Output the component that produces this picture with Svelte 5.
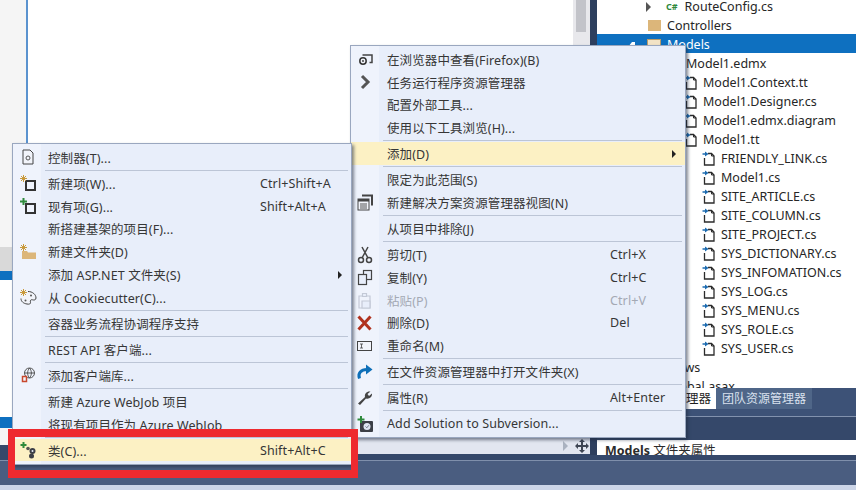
<script>
  const treeRows = [
    { label: 'RouteConfig.cs', depth: 'route', kind: 'cs' },
    { label: 'Controllers', depth: 'top', kind: 'folder' },
    { label: 'Models', depth: 'top', kind: 'open', selected: true },
    { label: 'Model1.edmx', depth: 'edmx', kind: 'none' },
    { label: 'Model1.Context.tt', depth: 'child', kind: 'file' },
    { label: 'Model1.Designer.cs', depth: 'child', kind: 'file' },
    { label: 'Model1.edmx.diagram', depth: 'child', kind: 'file' },
    { label: 'Model1.tt', depth: 'child', kind: 'file' },
    { label: 'FRIENDLY_LINK.cs', depth: 'leaf', kind: 'file' },
    { label: 'Model1.cs', depth: 'leaf', kind: 'file' },
    { label: 'SITE_ARTICLE.cs', depth: 'leaf', kind: 'file' },
    { label: 'SITE_COLUMN.cs', depth: 'leaf', kind: 'file' },
    { label: 'SITE_PROJECT.cs', depth: 'leaf', kind: 'file' },
    { label: 'SYS_DICTIONARY.cs', depth: 'leaf', kind: 'file' },
    { label: 'SYS_INFOMATION.cs', depth: 'leaf', kind: 'file' },
    { label: 'SYS_LOG.cs', depth: 'leaf', kind: 'file' },
    { label: 'SYS_MENU.cs', depth: 'leaf', kind: 'file' },
    { label: 'SYS_ROLE.cs', depth: 'leaf', kind: 'file' },
    { label: 'SYS_USER.cs', depth: 'leaf', kind: 'file' },
    { label: 'Views', depth: 'top', kind: 'none' },
    { label: 'Global.asax', depth: 'top', kind: 'none' }
  ];

  const addMenu = [
    { label: '控制器(T)...', icon: 'controller' },
    { sep: true },
    { label: '新建项(W)...', icon: 'newitem', key: 'Ctrl+Shift+A' },
    { label: '现有项(G)...', icon: 'existing', key: 'Shift+Alt+A' },
    { label: '新搭建基架的项目(F)...' },
    { label: '新建文件夹(D)', icon: 'newfolder' },
    { label: '添加 ASP.NET 文件夹(S)', arrow: true },
    { label: '从 Cookiecutter(C)...', icon: 'palette' },
    { sep: true },
    { label: '容器业务流程协调程序支持' },
    { sep: true },
    { label: 'REST API 客户端...' },
    { sep: true },
    { label: '添加客户端库...', icon: 'clientlib' },
    { sep: true },
    { label: '新建 Azure WebJob 项目' },
    { label: '将现有项目作为 Azure WebJob' },
    { sep: true },
    { label: '类(C)...', icon: 'cls', key: 'Shift+Alt+C', hot: true }
  ];

  const contextMenu = [
    { label: '在浏览器中查看(Firefox)(B)', icon: 'browser' },
    { label: '任务运行程序资源管理器', icon: 'chevron' },
    { label: '配置外部工具...' },
    { label: '使用以下工具浏览(H)...' },
    { sep: true },
    { label: '添加(D)', arrow: true, hot: true },
    { sep: true },
    { label: '限定为此范围(S)' },
    { label: '新建解决方案资源管理器视图(N)', icon: 'newview' },
    { sep: true },
    { label: '从项目中排除(J)' },
    { sep: true },
    { label: '剪切(T)', icon: 'cut', key: 'Ctrl+X' },
    { label: '复制(Y)', icon: 'copy', key: 'Ctrl+C' },
    { label: '粘贴(P)', icon: 'paste', key: 'Ctrl+V', disabled: true },
    { label: '删除(D)', icon: 'delete', key: 'Del' },
    { label: '重命名(M)', icon: 'rename' },
    { sep: true },
    { label: '在文件资源管理器中打开文件夹(X)', icon: 'open' },
    { sep: true },
    { label: '属性(R)', icon: 'wrench', key: 'Alt+Enter' },
    { sep: true },
    { label: 'Add Solution to Subversion...', icon: 'svn' }
  ];
</script>

{#snippet icon(name)}
  <svg class="icon" viewBox="0 0 18 18" width="18" height="18">
    {#if name === 'controller'}
      <path d="M4 2h7l3 3v11H4z" fill="#f2f4fa" stroke="#444" />
      <circle cx="9" cy="10" r="2" fill="none" stroke="#555" />
    {:else if name === 'newitem'}
      <rect x="7" y="7" width="9" height="9" fill="none" stroke="#333" stroke-width="2" />
      <path d="M4.500 1v7M1 4.500h7M2 2l5 5M7 2l-5 5" stroke="#c99a3c" />
    {:else if name === 'existing'}
      <rect x="7" y="7" width="9" height="9" fill="none" stroke="#333" stroke-width="2" />
      <path d="M4.500 1v7M1 4.500h7" stroke="#2f8a3c" stroke-width="2" />
    {:else if name === 'newfolder'}
      <path d="M3 8h5l1 1.500h8v6.500H3z" fill="#dcb67a" />
      <path d="M4.500 1v7M1 4.500h7M2 2l5 5M7 2l-5 5" stroke="#c99a3c" />
    {:else if name === 'palette'}
      <path d="M9 3.500c4.500 0 8 3 8 6.500 0 2-2 2.300-3.500 1.800-2-.5-2.500 1-2 2.500.3 1.500-1 2.200-3.500 1.700C4.500 15.500 2 13.500 2 10.500" fill="#f2f4fa" stroke="#444" />
      <circle cx="12" cy="7.500" r="1" fill="#555" />
      <circle cx="6.500" cy="12.500" r="1" fill="#555" />
      <path d="M4.500 1v7M1 4.500h7M2 2l5 5M7 2l-5 5" stroke="#c99a3c" />
    {:else if name === 'clientlib'}
      <circle cx="10.500" cy="7" r="5" fill="none" stroke="#555" />
      <path d="M5.500 7h10M10.500 2c-2.500 3-2.500 7 0 10M10.500 2c2.500 3 2.500 7 0 10" fill="none" stroke="#555" />
      <rect x="3.500" y="10.500" width="4" height="5" fill="#f2f4fa" stroke="#c8472c" stroke-width="1.500" />
    {:else if name === 'cls'}
      <path d="M4.500 1v6M1.500 4h6" stroke="#2f8a3c" stroke-width="2" />
      <circle cx="9" cy="7.500" r="1.800" fill="#555" />
      <circle cx="13.500" cy="10" r="3" fill="#3c3f46" />
      <circle cx="12.500" cy="15" r="2.500" fill="#3c3f46" />
      <circle cx="13.500" cy="10" r="1" fill="#e8eefa" />
    {:else if name === 'browser'}
      <path d="M6.500 5h9.500v7.500h-2.500" fill="none" stroke="#444" stroke-width="1.500" />
      <circle cx="7" cy="11" r="3.200" fill="#f2f4fa" stroke="#333" stroke-width="1.500" />
      <circle cx="7" cy="11" r=".9" fill="#333" />
    {:else if name === 'chevron'}
      <path d="M6 3l6 6-6 6" fill="none" stroke="#555" stroke-width="3" />
    {:else if name === 'newview'}
      <path d="M6 1.500h10v10" fill="none" stroke="#444" stroke-width="2" />
      <rect x="2" y="5" width="11" height="11" fill="#f2f4fa" stroke="#444" />
      <rect x="2" y="5" width="11" height="2.500" fill="#444" />
      <path d="M4 10h7M4 12h7M4 14h7" stroke="#555" />
    {:else if name === 'cut'}
      <path d="M6 1l6 11M12 1L6 12" stroke="#444" stroke-width="1.500" />
      <circle cx="5" cy="14" r="2.500" fill="none" stroke="#444" stroke-width="1.500" />
      <circle cx="13" cy="14" r="2.500" fill="none" stroke="#444" stroke-width="1.500" />
    {:else if name === 'copy'}
      <rect x="7.500" y="2.500" width="8" height="9" fill="#e8eefa" stroke="#444" stroke-width="1.200" />
      <rect x="2.500" y="6.500" width="8" height="10" fill="#e8eefa" stroke="#444" stroke-width="1.200" />
    {:else if name === 'paste'}
      <path d="M3 5h11v12H3z" fill="none" stroke="#c3c9d6" stroke-width="1.200" />
      <path d="M6.500 2.500h4v3h-4zM6 10h8v7H6z" fill="#e8eefa" stroke="#c3c9d6" stroke-width="1.200" />
    {:else if name === 'delete'}
      <path d="M2.500 2.500l12 13M14.500 2.500l-12 13" stroke="#b0321e" stroke-width="3" />
    {:else if name === 'rename'}
      <rect x="1.500" y="4.500" width="14" height="9" fill="#f2f4fa" stroke="#444" />
      <path d="M4 7h3M4 11h3M5.500 7v4" stroke="#444" stroke-width=".8" />
    {:else if name === 'open'}
      <path d="M3.500 15.500C1.500 10 5 6.500 11 6.500" fill="none" stroke="#0e6fb8" stroke-width="3" />
      <path d="M10 1.500l6.500 5-6.500 5z" fill="#0e6fb8" />
    {:else if name === 'wrench'}
      <path d="M2 14.500L9 8c-.7-3 1.500-6 5.500-5.500L11.500 5l1.500 2 3-2.500c.5 3.500-3 6-6 5l-6 6.500z" fill="#444" />
    {:else if name === 'svn'}
      <rect x="4" y="6" width="13" height="11" rx="1" fill="#3c3f46" />
      <circle cx="11" cy="11.500" r="3.500" fill="#dfe6f2" />
      <path d="M9.500 11.500l1.300 1.300 2-2.500" fill="none" stroke="#6f7785" />
      <path d="M5 1v7M1.500 4.500h7" stroke="#2f8a3c" stroke-width="2" />
    {/if}
  </svg>
{/snippet}

{#snippet menu(items, cls)}
  <div class="menu {cls}">
    <div class="gutter"></div>
    {#each items as item}
      {#if item.sep}
        <div class="sep"></div>
      {:else}
        <div class="row" class:hot={item.hot} class:disabled={item.disabled}>
          <span class="slot">{#if item.icon}{@render icon(item.icon)}{/if}</span>
          <span class="label">{item.label}</span>
          {#if item.key}<span class="key">{item.key}</span>{/if}
          {#if item.arrow}<span class="arrow"></span>{/if}
        </div>
      {/if}
    {/each}
  </div>
{/snippet}

<div class="page">
  <div class="workspace">
    <div class="strip">
      <div class="strip-fill"></div>
      <div class="strip-gray"></div>
      <div class="strip-blue"></div>
      <div class="strip-white"></div>
      <div class="strip-blue short"></div>
    </div>
    <div class="center">
      <div class="panes">
        <div class="editor"></div>
        <div class="scrollbar"><div class="thumb"></div></div>
      </div>
      <div class="footer-left">
        <span class="tri"></span>
        <svg class="move" viewBox="0 0 16 16" width="16" height="16">
          <path d="M8 1l3 3H9v3h3V5l3 3-3 3V9H9v3h2l-3 3-3-3h2V9H4v2L1 8l3-3v2h3V4H5z" fill="#3f4654" />
        </svg>
      </div>
    </div>
    <div class="gap"></div>
    <div class="right">
      <div class="tree">
        {#each treeRows as row}
          <div class="node {row.depth}" class:selected={row.selected}>
            {#if row.kind === 'cs'}
              <span class="expander"></span><span class="cs">C#</span>
            {:else if row.kind === 'folder'}
              <span class="dir"></span>
            {:else if row.kind === 'open'}
              <span class="twisty"></span><span class="dir open"></span>
            {:else if row.kind === 'file'}
              <svg class="file" viewBox="0 0 13 15" width="13" height="15">
                <path d="M6 2.500h3.500l2.500 2.500v9H2.500V7" fill="none" stroke="#2b2b2b" stroke-width="1.300" />
                <path d="M9.500 2.500V5H12" fill="none" stroke="#2b2b2b" />
                <path d="M.5 3h3" stroke="#1c6bb0" stroke-width="1.500" />
                <path d="M3 .5L6.500 3 3 5.500z" fill="#1c6bb0" />
              </svg>
            {/if}
            <span>{row.label}</span>
          </div>
        {/each}
      </div>
      <div class="tabs">
        <div class="tab active">解决方案资源管理器</div>
        <div class="tab">团队资源管理器</div>
      </div>
      <div class="props-title"><b>Models</b> 文件夹属性</div>
    </div>
  </div>
  <div class="statusbar"></div>
  <div class="base"></div>

  {@render menu(contextMenu, 'context')}
  {@render menu(addMenu, 'add')}
  <div class="callout"></div>
</div>

<style>
  :global(body) {
    margin: 0;
  }

  .page {
    position: relative;
    width: 856px;
    height: 490px;
    overflow: hidden;
    display: flex;
    flex-direction: column;
    background: #ccd5e8;
    font-family: "Noto Sans", "Noto Sans CJK SC", sans-serif;
    font-size: 12.5px;
    color: #2b2b2b;
  }

  /* Background windows */
  .workspace {
    height: 460px;
    display: flex;
    align-items: flex-start;
    background: #35486a;
  }

  .strip {
    width: 26px;
    height: 445px;
    flex: none;
    display: flex;
    flex-direction: column;
    background: #f5f5f5;
  }

  .strip-fill {
    height: 247px;
  }

  .strip-gray {
    height: 24px;
    background: #d9d9d9;
  }

  .strip-blue {
    height: 9px;
    background: #0e70c0;
  }

  .strip-blue.short {
    height: 11px;
  }

  .strip-white {
    height: 137px;
    background: #fff;
  }

  .center {
    width: 564px;
    flex: none;
    display: flex;
    flex-direction: column;
  }

  .panes {
    height: 438px;
    display: flex;
  }

  .editor {
    flex: 1;
    background: #fff;
    border-left: 2px solid #5b93cf;
  }

  .scrollbar {
    width: 17px;
    background: #e8e8ec;
  }

  .thumb {
    width: 10px;
    height: 32px;
    margin-left: 3px;
    background: #c2c3c9;
  }

  .footer-left {
    height: 16px;
    background: #e2e6f0;
    display: flex;
    justify-content: flex-end;
    align-items: center;
    gap: 6px;
  }

  .tri {
    border-left: 5px solid #aab2c0;
    border-top: 5px solid transparent;
    border-bottom: 5px solid transparent;
  }

  .gap {
    width: 7px;
    height: 455px;
    flex: none;
    background: #2e3f5e;
  }

  .right {
    width: 259px;
    flex: none;
    display: flex;
    flex-direction: column;
  }

  .tree {
    height: 392px;
    margin-top: -4px;
    overflow: hidden;
    background: #fff;
  }

  .node {
    height: 19px;
    box-sizing: border-box;
    padding-top: 2px;
    line-height: 17px;
    display: flex;
    align-items: center;
    white-space: nowrap;
    color: #262626;
  }

  .node.route { padding-left: 49px; }
  .node.top { padding-left: 70px; }
  .node.edmx { padding-left: 89px; }
  .node.child { padding-left: 91px; }
  .node.leaf { padding-left: 105px; }

  .node.selected {
    background: #0e70c0;
    color: #fff;
  }

  .node .file {
    margin-right: 6px;
    flex: none;
  }

  .node.child .file {
    margin-left: -4px;
  }

  .expander {
    width: 0;
    height: 0;
    border-left: 5px solid #555;
    border-top: 5px solid transparent;
    border-bottom: 5px solid transparent;
    margin-right: 15px;
  }

  .cs {
    color: #2f8a3c;
    font-size: 9px;
    font-weight: 700;
    margin-right: 7px;
  }

  .dir {
    width: 13px;
    height: 11px;
    background: #dcb67a;
    margin-left: -19px;
    margin-right: 6px;
  }

  .dir.open {
    width: 14px;
    margin-left: 0;
    margin-right: 6px;
    background: #f2e3c6;
    border: 1px solid #b99b68;
    box-sizing: border-box;
  }

  .twisty {
    width: 0;
    height: 0;
    margin-left: -39px;
    margin-right: 12px;
    border-left: 4px solid transparent;
    border-right: 3px solid #fff;
    border-bottom: 5px solid #fff;
  }

  .tabs {
    height: 28px;
    flex: none;
    display: flex;
    align-items: flex-start;
    background: #3d5277;
    border-bottom: 1px solid #8292ae;
    line-height: 21px;
  }

  .tab {
    height: 21px;
    padding: 0 6px;
    color: #d9e1ee;
    background: #4f6688;
    white-space: nowrap;
    font-size: 12px;
  }

  .tab.active {
    width: 119px;
    box-sizing: border-box;
    padding: 0 5px 0 0;
    font-size: 12.5px;
    text-align: right;
    background: #fff;
    color: #1e1e1e;
    overflow: hidden;
  }

  .props-title {
    height: 15px;
    margin-top: 23px;
    background: #fff;
    line-height: 22px;
    overflow: hidden;
    padding-left: 8px;
    white-space: nowrap;
  }

  .statusbar {
    height: 25px;
    box-sizing: border-box;
    background: #4a5d80;
    border-top: 1px solid #7f8fab;
  }

  .base {
    flex: 1;
    background: #ccd5e8;
  }

  /* Context menus float over the IDE */
  .menu {
    position: absolute;
    box-sizing: border-box;
    padding: 2px 0;
    background: #e8eefa;
    color: #363636;
    border: 1px solid #9aa7bf;
    box-shadow: 2px 2px 3px rgba(30, 40, 60, 0.55);
  }

  .gutter {
    position: absolute;
    left: 0;
    top: 0;
    bottom: 0;
    width: 28px;
    background: #eff3fc;
  }

  .menu.context {
    left: 350px;
    top: 45px;
    width: 336px;
    height: 393px;
    --key-x: 259px;
  }

  .menu.add {
    left: 12px;
    top: 143px;
    width: 340px;
    height: 322px;
    --key-x: 247px;
  }

  .row {
    position: relative;
    height: 22.8px;
    display: flex;
    align-items: center;
    white-space: nowrap;
    letter-spacing: 0.1px;
  }

  .row.hot {
    background: #fcf1c4;
  }

  .row.disabled {
    color: #a4a9b4;
  }

  .slot {
    width: 35px;
    flex: none;
    display: flex;
    padding-left: 6px;
    box-sizing: border-box;
  }

  .context .slot {
    width: 36px;
    padding-left: 5px;
  }

  .key {
    position: absolute;
    left: var(--key-x);
  }

  .arrow {
    position: absolute;
    right: 9px;
    width: 0;
    height: 0;
    border-left: 4px solid #222;
    border-top: 4px solid transparent;
    border-bottom: 4px solid transparent;
  }

  .sep {
    position: relative;
    height: 1px;
    margin: 1.1px 3px 1.1px 32px;
    background: #bcc5d6;
  }

  .callout {
    position: absolute;
    left: 8px;
    top: 429px;
    width: 350px;
    height: 49px;
    box-sizing: border-box;
    border: 7px solid #ee2a2f;
    border-top-width: 8px;
    border-bottom-width: 8px;
  }
</style>
